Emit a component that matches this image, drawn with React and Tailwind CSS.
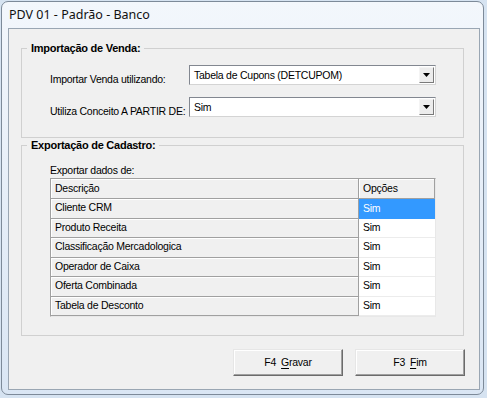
const rows = [
  "Cliente CRM",
  "Produto Receita",
  "Classificação Mercadologica",
  "Operador de Caixa",
  "Oferta Combinada",
  "Tabela de Desconto",
];

function Combo({ value }) {
  return (
    <div className="flex h-[20px] w-[247px] items-stretch border border-t-[#828790] border-l-[#828790] border-r-[#d4d4d4] border-b-[#d4d4d4] bg-white">
      <div className="flex flex-1 items-center pl-[4px] leading-none">{value}</div>
      <div className="my-[1px] mr-[1px] flex w-[15px] items-center justify-center border border-t-[#f4f4f4] border-l-[#f4f4f4] border-r-[#7a7a7a] border-b-[#7a7a7a] bg-[#ececec]">
        <svg width="7" height="4" viewBox="0 0 7 4">
          <path d="M0 0h7L3.5 4z" fill="#000" />
        </svg>
      </div>
    </div>
  );
}

function Button({ prefix, hot, rest }) {
  return (
    <button className="flex h-[27px] w-[110px] items-center justify-center gap-[5px] border border-t-[#e6e6e6] border-l-[#e6e6e6] border-r-[#6b6b6b] border-b-[#6b6b6b] bg-[#f0f0f0] shadow-[inset_-1px_-1px_0_#a0a0a0,inset_1px_1px_0_#ffffff]">
      <span>{prefix}</span>
      <span>
        <span className="underline underline-offset-2">{hot}</span>
        {rest}
      </span>
    </button>
  );
}

export default function App() {
  return (
    <div className="h-[398px] w-[487px] overflow-hidden bg-[#d6e3f1] font-['Liberation_Sans',Arial,sans-serif] text-[10.5px] tracking-[-0.25px] text-black">
      <div className="ml-[1px] mt-[1px] flex h-[394px] w-[483px] flex-col rounded-[7px] border border-[#7d8a99] bg-gradient-to-b from-[#f3f7fc] via-[#e6eef8] to-[#dae6f4] pb-[4px] pl-[6px] pr-[3px]">
        <div className="flex h-[26px] items-center pl-[1px] pt-[1px] font-['Noto_Sans',sans-serif] text-[12.5px] tracking-normal text-[#111]">
          PDV 01 - Padrão - Banco
        </div>

        <div className="flex flex-1 flex-col border border-[#9aa6b3] bg-[#f0f0f0] px-[12px]">
          <fieldset className="mt-[12px] h-[97px] w-[443px] border border-[#d0d0d0] pl-[28px]">
            <legend className="-ml-[23px] px-[4px] text-[11px] font-bold leading-[14px]">Importação de Venda:</legend>
            <div className="mt-[10px] flex items-start">
              <span className="w-[139px] whitespace-nowrap pt-[7px] leading-[14px]">Importar Venda utilizando:</span>
              <Combo value="Tabela de Cupons (DETCUPOM)" />
            </div>
            <div className="mt-[11px] flex items-start">
              <span className="w-[139px] whitespace-nowrap pt-[7px] leading-[14px]">Utiliza Conceito A PARTIR DE:</span>
              <Combo value="Sim" />
            </div>
          </fieldset>

          <fieldset className="h-[198px] w-[443px] border border-[#d0d0d0] pl-[28px]">
            <legend className="-ml-[23px] px-[4px] text-[11px] font-bold leading-[14px]">Exportação de Cadastro:</legend>
            <div className="mt-[11px] leading-[14px]">Exportar dados de:</div>
            <div className="mt-[1px] w-[386px] border border-t-[#a0a0a0] border-l-[#a0a0a0] border-r-[#e8e8e8] border-b-[#e8e8e8]">
              <div className="flex h-[20px]">
                <div className="flex w-[308px] items-center border-r border-b border-[#a0a0a0] bg-[#f0f0f0] pl-[4px] shadow-[inset_1px_1px_0_#ffffff]">Descrição</div>
                <div className="flex flex-1 items-center border-r border-b border-[#a0a0a0] bg-[#f0f0f0] pl-[4px] shadow-[inset_1px_1px_0_#ffffff]">Opções</div>
              </div>
              {rows.map((r, i) => (
                <div key={r} className="flex h-[19.5px]">
                  <div className="flex w-[308px] items-center border-r border-b border-[#a0a0a0] bg-[#f0f0f0] pl-[4px] shadow-[inset_1px_1px_0_#ffffff]">{r}</div>
                  <div className={i === 0 ? "flex flex-1 items-center bg-[#3399ff] pl-[4px] text-white" : "flex flex-1 items-center border-b border-[#ececec] bg-white pl-[4px]"}>
                    Sim
                  </div>
                </div>
              ))}
            </div>
          </fieldset>

          <div className="mt-[13px] flex justify-end gap-[12px] pr-[2px]">
            <Button prefix="F4" hot="G" rest="ravar" />
            <Button prefix="F3" hot="F" rest="im" />
          </div>
        </div>
      </div>
    </div>
  );
}
